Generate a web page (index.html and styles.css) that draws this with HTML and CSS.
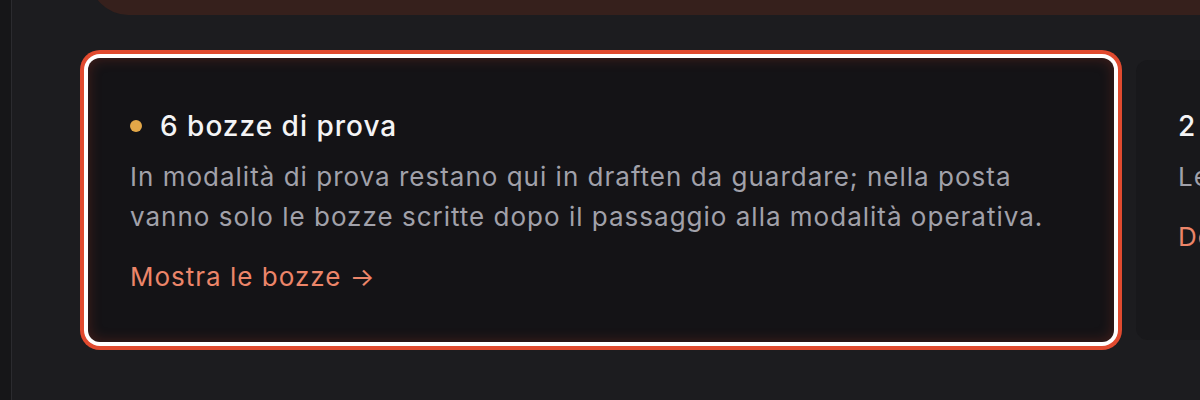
FILE: index.html
```html
<!DOCTYPE html>
<html lang="it">
<head>
<meta charset="utf-8">
<title>Bozze</title>
<link rel="stylesheet" href="styles.css">
</head>
<body>
<div class="app">
  <aside class="sidebar"></aside>
  <main class="main">
    <div class="banner"></div>
    <div class="cards">
      <section class="card card-focus">
        <h2 class="card-title"><span class="dot"></span>6 bozze di prova</h2>
        <p class="card-text">In modalità di prova restano qui in draften da guardare; nella posta vanno solo le bozze scritte dopo il passaggio alla modalità operativa.</p>
        <a class="card-link" href="#">Mostra le bozze →</a>
      </section>
      <section class="card card-plain">
        <h2 class="card-title">2 bozze in attesa di revisione</h2>
        <p class="card-text">Le bozze restano in attesa finché non vengono approvate o scartate.</p>
        <a class="card-link" href="#">Decidi ora →</a>
      </section>
    </div>
  </main>
</div>
</body>
</html>
```
FILE: styles.css
```css
html, body {
  margin: 0;
  padding: 0;
  background: #1c1c1f;
  width: 1200px;
  height: 400px;
  overflow: hidden;
  font-family: Inter, "Noto Sans", sans-serif;
}

.app {
  display: flex;
  height: 400px;
}

.sidebar {
  width: 11px;
  flex: none;
  background: #161618;
  border-right: 1px solid #2b2b2f;
}

.main {
  flex: 1;
  min-width: 0;
  padding-left: 76px;
  overflow: hidden;
}

.banner {
  height: 100px;
  margin-top: -85px;
  margin-left: 2px;
  margin-right: -40px;
  background: #36201c;
  border-radius: 0 0 0 38px;
}

.cards {
  display: flex;
  align-items: center;
  gap: 22px;
  margin-top: 43px;
}

.card {
  flex: none;
  width: 1026px;
  box-sizing: border-box;
  border-radius: 12px;
  padding: 52px 42px 0;
}

.card-focus {
  height: 284px;
  background: #141316;
  box-shadow:
    0 0 0 4px #ffffff,
    0 0 0 8px #e04a2f,
    inset 0 0 14px rgba(200, 60, 40, 0.28);
}

.card-plain {
  height: 280px;
  padding-top: 50px;
  background: #18181b;
}

.card-title {
  margin: 0;
  display: flex;
  align-items: center;
  gap: 18px;
  font-size: 28px;
  line-height: 32px;
  font-weight: 500;
  letter-spacing: 1px;
  color: #f4f4f5;
  white-space: nowrap;
}

.dot {
  width: 12px;
  height: 12px;
  border-radius: 50%;
  background: #e3a748;
  flex: none;
}

.card-text {
  margin: 15px 0 0;
  max-width: 942px;
  font-size: 26px;
  line-height: 40px;
  letter-spacing: 1px;
  color: #a1a1aa;
}

.card-plain .card-text {
  white-space: nowrap;
}

.card-link {
  display: block;
  width: fit-content;
  margin-top: 24px;
  font-size: 26px;
  line-height: 32px;
  letter-spacing: 1px;
  color: #ec8569;
  text-decoration: none;
}
```
